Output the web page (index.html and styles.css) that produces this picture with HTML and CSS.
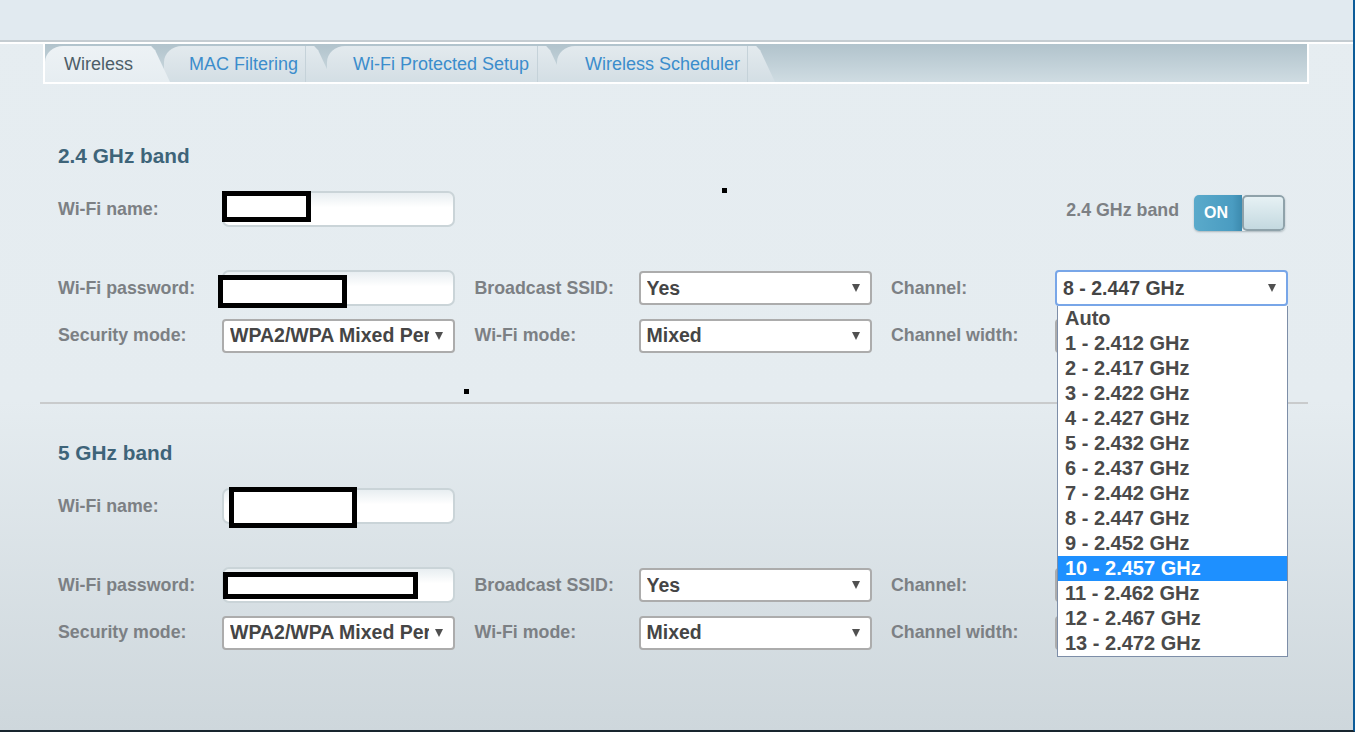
FILE: index.html
```html
<!DOCTYPE html>
<html>
<head>
<meta charset="utf-8">
<title>Wireless</title>
<link rel="stylesheet" href="styles.css">
</head>
<body>
<div class="page">
  <div class="topband"></div>
  <div class="rule"></div>
  <div class="tabbar">
    <div class="tab active t1"><span>Wireless</span></div>
    <div class="tab t2"><span>MAC Filtering</span></div>
    <div class="tab t3"><span>Wi-Fi Protected Setup</span></div>
    <div class="tab t4"><span>Wireless Scheduler</span></div>
  </div>

  <section class="band band1">
    <h2 class="band-title">2.4 GHz band</h2>
    <div class="row r1">
      <div class="pair">
        <span class="lbl">Wi-Fi name:</span>
        <div class="field"><div class="redact rd1"></div></div>
      </div>
      <div class="pair"></div>
      <div class="pair toggle-pair">
        <span class="lbl">2.4 GHz band</span>
        <div class="toggle"><span class="on">ON</span><span class="knob"></span></div>
      </div>
    </div>
    <div class="row r2">
      <div class="pair">
        <span class="lbl">Wi-Fi password:</span>
        <div class="field"><div class="redact rd2"></div></div>
      </div>
      <div class="pair">
        <span class="lbl">Broadcast SSID:</span>
        <div class="sel"><span class="txt">Yes</span><span class="arr"></span></div>
      </div>
      <div class="pair">
        <span class="lbl">Channel:</span>
        <div class="sel focus"><span class="txt">8 - 2.447 GHz</span><span class="arr"></span>
          <div class="dropdown">
            <div class="opt">Auto</div>
            <div class="opt">1 - 2.412 GHz</div>
            <div class="opt">2 - 2.417 GHz</div>
            <div class="opt">3 - 2.422 GHz</div>
            <div class="opt">4 - 2.427 GHz</div>
            <div class="opt">5 - 2.432 GHz</div>
            <div class="opt">6 - 2.437 GHz</div>
            <div class="opt">7 - 2.442 GHz</div>
            <div class="opt">8 - 2.447 GHz</div>
            <div class="opt">9 - 2.452 GHz</div>
            <div class="opt hl">10 - 2.457 GHz</div>
            <div class="opt">11 - 2.462 GHz</div>
            <div class="opt">12 - 2.467 GHz</div>
            <div class="opt">13 - 2.472 GHz</div>
          </div>
        </div>
      </div>
    </div>
    <div class="row r3">
      <div class="pair">
        <span class="lbl">Security mode:</span>
        <div class="sel"><span class="txt">WPA2/WPA Mixed Personal</span><span class="arr"></span></div>
      </div>
      <div class="pair">
        <span class="lbl">Wi-Fi mode:</span>
        <div class="sel"><span class="txt">Mixed</span><span class="arr"></span></div>
      </div>
      <div class="pair">
        <span class="lbl">Channel width:</span>
        <div class="sel"><span class="txt">Auto</span><span class="arr"></span></div>
      </div>
    </div>
  </section>

  <div class="separator"></div>

  <section class="band band2">
    <h2 class="band-title">5 GHz band</h2>
    <div class="row r1">
      <div class="pair">
        <span class="lbl">Wi-Fi name:</span>
        <div class="field"><div class="redact rd3"></div></div>
      </div>
      <div class="pair"></div>
      <div class="pair toggle-pair">
        <span class="lbl">5 GHz band</span>
        <div class="toggle"><span class="on">ON</span><span class="knob"></span></div>
      </div>
    </div>
    <div class="row r2">
      <div class="pair">
        <span class="lbl">Wi-Fi password:</span>
        <div class="field"><div class="redact rd4"></div></div>
      </div>
      <div class="pair">
        <span class="lbl">Broadcast SSID:</span>
        <div class="sel"><span class="txt">Yes</span><span class="arr"></span></div>
      </div>
      <div class="pair">
        <span class="lbl">Channel:</span>
        <div class="sel"><span class="txt">Auto</span><span class="arr"></span></div>
      </div>
    </div>
    <div class="row r3">
      <div class="pair">
        <span class="lbl">Security mode:</span>
        <div class="sel"><span class="txt">WPA2/WPA Mixed Personal</span><span class="arr"></span></div>
      </div>
      <div class="pair">
        <span class="lbl">Wi-Fi mode:</span>
        <div class="sel"><span class="txt">Mixed</span><span class="arr"></span></div>
      </div>
      <div class="pair">
        <span class="lbl">Channel width:</span>
        <div class="sel"><span class="txt">Auto</span><span class="arr"></span></div>
      </div>
    </div>
  </section>

  <div class="dot d1"></div>
  <div class="dot d2"></div>
</div>
</body>
</html>
```

FILE: styles.css
```css
html, body {
  margin: 0;
  padding: 0;
}
body {
  font-family: "Liberation Sans", Arial, sans-serif;
  overflow: hidden;
}
.page {
  position: relative;
  width: 1355px;
  height: 732px;
  box-sizing: border-box;
  border-right: 2px solid #0c5c99;
  border-bottom: 2px solid #18252e;
  overflow: hidden;
  background: linear-gradient(to bottom, #e6edf1 0%, #e5ecf0 55%, #ced7dc 100%);
}
.topband {
  height: 40px;
  background: #e1eaf0;
}
.rule {
  height: 2px;
  background: #c4ccd1;
  border-bottom: 2px solid #ffffff;
}

/* Tabs */
.tabbar {
  display: flex;
  margin-left: 43px;
  width: 1266px;
  height: 40px;
  box-sizing: border-box;
  border: 2px solid #ffffff;
  border-top: 0;
  background: linear-gradient(to bottom, #b1c3cc, #cfdce2);
}
.tab {
  position: relative;
  z-index: 0;
  height: 100%;
  display: flex;
  align-items: center;
  padding-top: 2px;
  box-sizing: border-box;
  font-size: 18px;
  color: #3b8dcc;
  white-space: nowrap;
}
.tab::before {
  content: "";
  position: absolute;
  left: 0;
  top: 2px;
  bottom: 0;
  right: 27px;
  border-top-left-radius: 18px 16px;
  background: linear-gradient(to bottom, #e3eaee, #d3dee4);
  border-right: 1px solid #c5d2d9;
  z-index: -1;
}
.tab::after {
  content: "";
  position: absolute;
  right: 0;
  top: 2px;
  bottom: 0;
  width: 27px;
  background: linear-gradient(to bottom, #e3eaee, #d3dee4);
  clip-path: polygon(0 0, 30% 0, 45% 12%, 100% 100%, 0 100%);
  z-index: -1;
}
.tab.active {
  color: #4d5d68;
}
.tab.active::before {
  background: linear-gradient(to bottom, #edf2f5, #e6edf1);
  border-right: 0;
  right: 26px;
}
.tab.active::after {
  background: linear-gradient(to bottom, #edf2f5, #e6edf1);
  width: 27px;
}
.t1 { width: 125px; padding-left: 19px; z-index: 4; }
.t2 { width: 169px; padding-left: 25px; margin-left: -6px; z-index: 3; }
.t3 { width: 238px; padding-left: 26px; margin-left: -6px; z-index: 2; }
.t4 { width: 218px; padding-left: 28px; margin-left: -8px; z-index: 1; }

/* Bands */
.band {
  padding-left: 58px;
}
.band1 { padding-top: 60px; }
.band2 { padding-top: 37px; }
.band-title {
  margin: 0;
  font-size: 20.8px;
  line-height: 24px;
  font-weight: bold;
  color: #3e6479;
}
.row {
  display: grid;
  grid-template-columns: repeat(3, 397px);
  column-gap: 19.5px;
  align-items: stretch;
}
.row.r1 { margin-top: 23px; height: 36px; grid-template-rows: 36px; }
.row.r2 { margin-top: 43px; height: 36px; grid-template-rows: 36px; }
.row.r3 { margin-top: 12px; height: 35px; grid-template-rows: 35px; }
.pair {
  display: flex;
  align-items: center;
  min-height: 0;
}
.lbl {
  width: 164px;
  flex: none;
  font-size: 17.8px;
  font-weight: bold;
  color: #7c8084;
  white-space: nowrap;
}
.field {
  position: relative;
  width: 233px;
  height: 36px;
  box-sizing: border-box;
  border: 2px solid #cad4d8;
  border-radius: 7px;
  background: linear-gradient(to bottom, #e8eef1 0%, #ffffff 45%);
}
.redact {
  position: absolute;
  box-sizing: border-box;
  border: 5px solid #000;
  background: #fff;
}
.rd1 { left: -2px; top: -2px; width: 89px; height: 31px; }
.rd2 { left: -6px; top: 3px; width: 129px; height: 33px; }
.rd3 { left: 5px; top: -3px; width: 128px; height: 41px; }
.rd4 { left: -1px; top: 3px; width: 195px; height: 27px; }

.sel {
  position: relative;
  width: 233px;
  height: 34px;
  box-sizing: border-box;
  border: 2px solid #acacac;
  border-radius: 4px;
  background: #ffffff;
  display: flex;
  align-items: center;
  padding: 0 10px 0 6px;
  font-size: 19.5px;
  font-weight: bold;
  color: #454545;
}
.sel .txt {
  flex: 1;
  min-width: 0;
  overflow: hidden;
  white-space: nowrap;
}
.sel .arr {
  flex: none;
  width: 0;
  height: 0;
  margin-left: 6px;
  border-left: 4px solid transparent;
  border-right: 4px solid transparent;
  border-top: 8px solid #505050;
}
.sel.focus {
  border-color: #78a6e8;
  height: 36px;
}

.dropdown {
  position: absolute;
  left: 0;
  top: calc(100% + 2px);
  width: 231px;
  box-sizing: border-box;
  background: #ffffff;
  border: 1px solid #7d8ea8;
  border-top: 0;
  z-index: 10;
  font-size: 20px;
  font-weight: bold;
  color: #4a4a4a;
}
.opt {
  height: 25px;
  line-height: 25px;
  padding-left: 7px;
  white-space: nowrap;
}
.opt.hl {
  background: #1e90ff;
  color: #ffffff;
}

.toggle-pair {
  justify-content: flex-end;
  padding-right: 3px;
}
.toggle-pair .lbl {
  width: auto;
  margin-right: 15px;
  margin-top: 2px;
}
.toggle {
  display: flex;
  align-self: flex-start;
  flex: none;
  width: 91px;
  height: 36px;
  margin-top: 4px;
  box-sizing: border-box;
  border-radius: 5px;
  overflow: hidden;
  box-shadow: 0 1px 2px rgba(60, 80, 90, 0.35);
}
.toggle .on {
  width: 48px;
  display: flex;
  align-items: center;
  justify-content: center;
  padding-right: 4px;
  box-sizing: border-box;
  background: linear-gradient(to right, #5aaacb, #4a9cc1 80%, #3c8aae);
  color: #ffffff;
  font-size: 16px;
  font-weight: bold;
}
.toggle .knob {
  flex: 1;
  box-sizing: border-box;
  border: 2px solid #8fa2aa;
  border-radius: 5px;
  background: linear-gradient(to bottom, #e6f1f4, #c4d9e0);
}

.separator {
  margin: 49px 0 0 40px;
  width: 1268px;
  height: 2px;
  background: #c9cbcc;
}

.dot {
  position: absolute;
  width: 5px;
  height: 5px;
  background: #000;
}
.d1 { left: 722px; top: 188px; }
.d2 { left: 464px; top: 389px; }
```
